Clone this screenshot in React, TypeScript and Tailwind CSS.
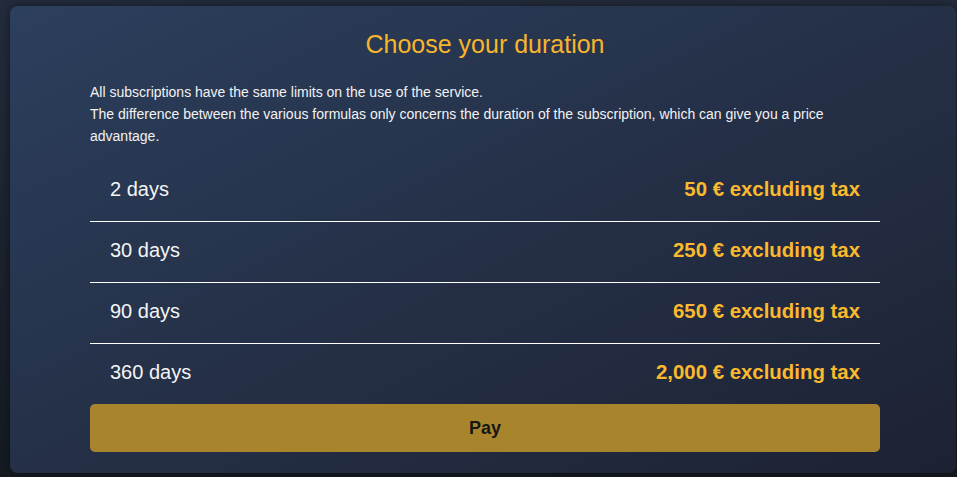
import React from "react";

const rows = [
  { label: "2 days", price: "50 € excluding tax" },
  { label: "30 days", price: "250 € excluding tax" },
  { label: "90 days", price: "650 € excluding tax" },
  { label: "360 days", price: "2,000 € excluding tax" },
];

export default function App() {
  return (
    <div
      className="w-full h-[477px] overflow-hidden bg-gradient-to-b from-[#232c3d] to-[#151a22] pt-[6px] pl-[10px]"
      style={{ fontFamily: '"Liberation Sans", Arial, Helvetica, sans-serif' }}
    >
      <div className="w-[946px] h-[467px] rounded-[8px] bg-gradient-to-br from-[#2c3f5d] to-[#1d2233] shadow-[0_0_10px_rgba(0,0,0,0.45)] pt-[22px] pl-[80px] pr-[76px]">
        <h1 className="text-center text-[25px] leading-[32px] font-normal text-[#f7b52c]">
          Choose your duration
        </h1>
        <p className="mt-[21px] text-[14px] leading-[22px] text-[#f2f2f2]">
          All subscriptions have the same limits on the use of the service.
          <br />
          The difference between the various formulas only concerns the duration of the subscription, which can give you a price advantage.
        </p>
        <div className="mt-[14px]">
          {rows.map((r, i) => (
            <div
              key={r.label}
              className={
                i < rows.length - 1
                  ? "flex items-center justify-between h-[61px] px-[20px] pb-[4px] border-b border-white"
                  : "flex items-center justify-between h-[60px] px-[20px] pb-[4px]"
              }
            >
              <span className="text-[20px] text-[#f4f4f4]">{r.label}</span>
              <span className="text-[20.4px] font-bold text-[#fbb92e]">{r.price}</span>
            </div>
          ))}
        </div>
        <button className="w-full h-[48px] rounded-[5px] bg-[#a8852d] text-[18px] font-bold text-[#161616]">
          Pay
        </button>
      </div>
    </div>
  );
}
